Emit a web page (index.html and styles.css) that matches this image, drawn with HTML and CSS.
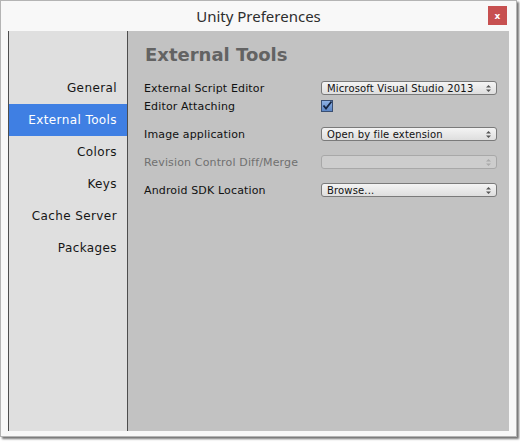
FILE: index.html
```html
<!DOCTYPE html>
<html>
<head>
<meta charset="utf-8">
<link rel="stylesheet" href="styles.css">
</head>
<body>
<div class="window">
  <div class="titlebar">
    <span class="title">Unity Preferences</span>
    <button class="close">x</button>
  </div>
  <div class="content">
    <nav class="sidebar">
      <div class="item">General</div>
      <div class="item selected">External Tools</div>
      <div class="item">Colors</div>
      <div class="item">Keys</div>
      <div class="item">Cache Server</div>
      <div class="item">Packages</div>
    </nav>
    <main class="main">
      <h1 class="heading">External Tools</h1>
      <div class="row">
        <span class="label">External Script Editor</span>
        <div class="popup"><span>Microsoft Visual Studio 2013</span><svg class="arrows" width="5" height="7" viewBox="0 0 5 7"><path d="M2.5 0 L5 2.5 L0 2.5 Z M0 4.5 L5 4.5 L2.5 7 Z" fill="#555"/></svg></div>
      </div>
      <div class="row">
        <span class="label">Editor Attaching</span>
        <svg class="check" width="12" height="12" viewBox="0 0 12 12"><defs><linearGradient id="cb" x1="0" y1="0" x2="0" y2="1"><stop offset="0" stop-color="#8fb2e4"/><stop offset="1" stop-color="#5a84c4"/></linearGradient></defs><rect x="0.5" y="0.5" width="11" height="11" fill="url(#cb)" stroke="#3a4f72"/><path d="M2.5 5.5 L5 8.5 L10.5 1.5" fill="none" stroke="#14233f" stroke-width="1.8"/></svg>
      </div>
      <div class="row spaced">
        <span class="label">Image application</span>
        <div class="popup"><span>Open by file extension</span><svg class="arrows" width="5" height="7" viewBox="0 0 5 7"><path d="M2.5 0 L5 2.5 L0 2.5 Z M0 4.5 L5 4.5 L2.5 7 Z" fill="#555"/></svg></div>
      </div>
      <div class="row spaced">
        <span class="label disabled">Revision Control Diff/Merge</span>
        <div class="popup off"><span></span><svg class="arrows" width="5" height="7" viewBox="0 0 5 7"><path d="M2.5 0 L5 2.5 L0 2.5 Z M0 4.5 L5 4.5 L2.5 7 Z" fill="#aaa"/></svg></div>
      </div>
      <div class="row spaced">
        <span class="label">Android SDK Location</span>
        <div class="popup"><span>Browse...</span><svg class="arrows" width="5" height="7" viewBox="0 0 5 7"><path d="M2.5 0 L5 2.5 L0 2.5 Z M0 4.5 L5 4.5 L2.5 7 Z" fill="#555"/></svg></div>
      </div>
    </main>
  </div>
</div>
</body>
</html>
```

FILE: styles.css
```css
* { box-sizing: border-box; }
html, body {
  margin: 0;
  padding: 0;
  background: #ffffff;
  width: 520px;
  height: 443px;
  overflow: hidden;
}
.window {
  width: 517px;
  height: 437px;
  background: #f8f8f8;
  border: 1px solid #b4b4b4;
  box-shadow: 2px 2px 2px rgba(0,0,0,0.55);
  display: flex;
  flex-direction: column;
}
.titlebar {
  height: 30px;
  position: relative;
  display: flex;
  align-items: center;
  justify-content: center;
}
.title {
  font-family: "Noto Sans", "Open Sans", sans-serif;
  font-size: 15px;
  color: #2e2e2e;
}
.close {
  position: absolute;
  left: 487px;
  top: 5px;
  width: 19px;
  height: 19px;
  padding: 0;
  border: none;
  background: #c75050;
  color: #ffffff;
  font-family: "DejaVu Sans", sans-serif;
  font-weight: bold;
  font-size: 9px;
  line-height: 18px;
}
.content {
  margin-left: 7px;
  width: 501px;
  height: 400px;
  display: flex;
  border-left: 1px solid #4d4d4d;
}
.sidebar {
  width: 121px;
  background: #dfdfdf;
  border-right: 1px solid #4d4d4d;
  padding-top: 41px;
}
.item {
  height: 32px;
  line-height: 32px;
  text-align: right;
  padding-right: 10px;
  font-family: "DejaVu Sans", sans-serif;
  font-size: 12px;
  letter-spacing: 0.4px;
  color: #161616;
}
.item.selected {
  background: #3f7fe3;
  color: #ffffff;
}
.main {
  flex: 1;
  background: #c2c2c2;
  padding: 13px 12px 0 16px;
}
.heading {
  margin: 0 0 13px 1px;
  font-family: "DejaVu Sans", sans-serif;
  font-weight: bold;
  font-size: 18px;
  line-height: 22px;
  color: #636363;
}
.row {
  height: 18px;
  display: flex;
  align-items: center;
}
.row.spaced { margin-top: 10px; }
.label {
  width: 177px;
  font-family: "DejaVu Sans", sans-serif;
  font-size: 11px;
  letter-spacing: 0.15px;
  color: #111111;
}
.label.disabled { color: #707070; }
.popup {
  width: 176px;
  height: 14px;
  border: 1px solid #7a7a7a;
  border-radius: 3px;
  background: linear-gradient(#f4f4f4, #dedede);
  display: flex;
  align-items: center;
  justify-content: space-between;
  padding: 0 5px 0 5px;
  font-family: "DejaVu Sans", sans-serif;
  font-size: 10px;
  letter-spacing: 0.15px;
  color: #111111;
}
.popup.off {
  border-color: #a8a8a8;
  background: #cdcdcd;
}
.arrows { flex: none; }
.check { flex: none; }
```
